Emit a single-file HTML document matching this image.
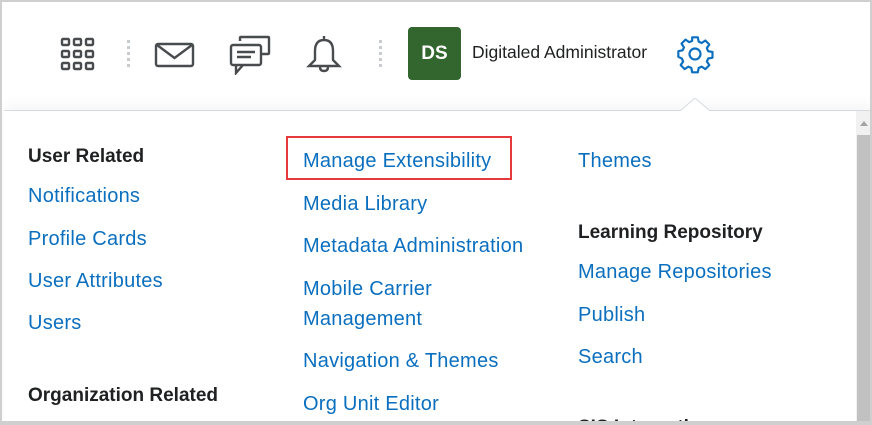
<!DOCTYPE html>
<html><head><style>
body{margin:0;width:872px;height:425px;overflow:hidden;font-family:"Liberation Sans",sans-serif;background:#fff;position:relative}
.frame{position:absolute;left:0;top:0;width:868px;height:421px;border:2px solid #cfcfcf;border-bottom:none;overflow:hidden;background:#fff}
.panel{position:absolute;left:2px;top:108px;width:870px;height:320px;border-top:1px solid #d6dbe0;background:#fff;box-shadow:0 -6px 12px rgba(0,0,0,.04)}
.a{position:absolute;color:#0b6fbf;font-size:20px;letter-spacing:.25px;white-space:nowrap}
.h{position:absolute;color:#202122;font-size:19px;font-weight:bold;white-space:nowrap}
.sep{position:absolute;width:3px;height:30px;top:38px;background:repeating-linear-gradient(#c8ccd1 0 3px,transparent 3px 6px)}
</style></head><body>
<div class="frame">
<svg style="position:absolute;left:58px;top:35px" width="36" height="36" viewBox="0 0 36 36" fill="none" stroke="#494c4e" stroke-width="2.4">
<rect x="2" y="2" width="7" height="6" rx="1"/><rect x="14" y="2" width="7" height="6" rx="1"/><rect x="26" y="2" width="7" height="6" rx="1"/>
<rect x="2" y="14" width="7" height="6" rx="1"/><rect x="14" y="14" width="7" height="6" rx="1"/><rect x="26" y="14" width="7" height="6" rx="1"/>
<rect x="2" y="26" width="7" height="6" rx="1"/><rect x="14" y="26" width="7" height="6" rx="1"/><rect x="26" y="26" width="7" height="6" rx="1"/></svg>
<div class="sep" style="left:125px"></div>
<svg style="position:absolute;left:152px;top:40px" width="42" height="26" viewBox="0 0 42 26" fill="none" stroke="#494c4e" stroke-width="2.4"><rect x="2" y="2" width="37" height="22" rx="2"/><path d="M3 3 L20.5 16 L38 3"/></svg>
<svg style="position:absolute;left:226px;top:33px" width="44" height="40" viewBox="0 0 44 40" fill="none" stroke="#494c4e" stroke-width="2.4"><path d="M12 6 V3 Q12 2 13 2 H40 Q41 2 41 3 V18 Q41 19 40 19 H34"/><rect x="3" y="10" width="30" height="20" rx="2"/><path d="M8 30 V38 L15 30"/><path d="M9 17 H27 M9 22 H23"/></svg>
<svg style="position:absolute;left:302px;top:32px" width="40" height="40" viewBox="0 0 40 40" fill="none" stroke="#494c4e" stroke-width="2.4"><path d="M20 2 V6 M20 6 Q11 6 11 17 V26 L5 32 H35 L29 26 V17 Q29 6 20 6"/><path d="M16 33 Q16 37 20 37 Q24 37 24 33"/></svg>
<div class="sep" style="left:377px"></div>
<div style="position:absolute;left:406px;top:25px;width:53px;height:53px;border-radius:4px;background:#33652e;color:#fff;font-weight:bold;font-size:19px;line-height:53px;text-align:center">DS</div>
<div style="position:absolute;left:470px;top:40px;font-size:17.5px;color:#202122">Digitaled Administrator</div>
<svg style="position:absolute;left:673px;top:32px" width="40" height="40" viewBox="0 0 24 24" fill="none" stroke="#0b6fbf" stroke-width="1.3" stroke-linejoin="round"><circle cx="12" cy="12" r="3.3"/><path d="M10.3 2h3.4l.5 2.6 1.8.8 2.2-1.5 2.4 2.4-1.5 2.2.8 1.8 2.6.5v3.4l-2.6.5-.8 1.8 1.5 2.2-2.4 2.4-2.2-1.5-1.8.8-.5 2.6h-3.4l-.5-2.6-1.8-.8-2.2 1.5-2.4-2.4 1.5-2.2-.8-1.8L2 13.7v-3.4l2.6-.5.8-1.8-1.5-2.2 2.4-2.4 2.2 1.5 1.8-.8z"/></svg>
<div class="panel">
<div style="position:absolute;left:852px;top:0;width:18px;height:320px;background:#f1f1f1"></div>
<div style="position:absolute;left:853px;top:24px;width:14px;height:300px;background:#c1c1c1"></div>
<div style="position:absolute;left:856px;top:10px;width:0;height:0;border-left:4px solid transparent;border-right:4px solid transparent;border-bottom:5px solid #a3a3a3"></div>
</div>
<svg style="position:absolute;left:678px;top:96px" width="30" height="14"><path d="M0 13 L15 0 L30 13" fill="#fff" stroke="#d6dbe0"/><rect x="0" y="13" width="30" height="2" fill="#fff"/></svg>
<div class="h" style="left:26px;top:144px">User Related</div>
<div class="a" style="left:26px;top:183px">Notifications</div>
<div class="a" style="left:26px;top:226px">Profile Cards</div>
<div class="a" style="left:26px;top:268px">User Attributes</div>
<div class="a" style="left:26px;top:310px">Users</div>
<div class="h" style="left:26px;top:383px">Organization Related</div>
<div style="position:absolute;left:284px;top:134px;width:226px;height:44px;border:2px solid #e5393c;box-sizing:border-box"></div>
<div class="a" style="left:301px;top:148px">Manage Extensibility</div>
<div class="a" style="left:301px;top:191px">Media Library</div>
<div class="a" style="left:301px;top:233px">Metadata Administration</div>
<div class="a" style="left:301px;top:276px">Mobile Carrier</div>
<div class="a" style="left:301px;top:306px">Management</div>
<div class="a" style="left:301px;top:348px">Navigation &amp; Themes</div>
<div class="a" style="left:301px;top:391px">Org Unit Editor</div>
<div class="a" style="left:576px;top:148px">Themes</div>
<div class="h" style="left:576px;top:220px">Learning Repository</div>
<div class="a" style="left:576px;top:259px">Manage Repositories</div>
<div class="a" style="left:576px;top:302px">Publish</div>
<div class="a" style="left:576px;top:344px">Search</div>
<div class="h" style="left:576px;top:415px">SIS Integration</div>
</div>
<div style="position:absolute;left:0;top:421px;width:872px;height:4px;background:#cfcfcf"></div>
</body></html>
